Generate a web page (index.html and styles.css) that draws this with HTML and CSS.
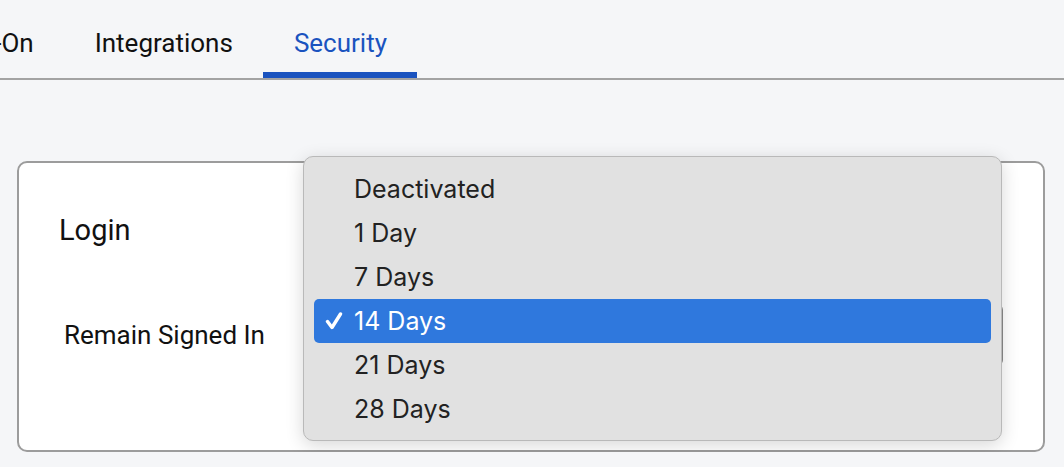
FILE: index.html
```html
<!DOCTYPE html>
<html lang="en">
<head>
  <meta charset="UTF-8">
  <meta name="viewport" content="width=device-width, initial-scale=1.0">
  <title>Settings - Security</title>
  <link rel="stylesheet" href="styles.css">
</head>
<body>
  <!-- Tab strip -->
  <div class="tab-strip">
    <div class="tabs">
      <div class="tab">Single Sign-On</div>
      <div class="tab">Integrations</div>
      <div class="tab active">Security</div>
    </div>
  </div>

  <div class="card">
    <h2 class="card-title">Login</h2>
    <div class="field-row">
      <label class="field-label">Remain Signed In</label>
      <div class="select-box"></div>
    </div>

    <!-- Open select menu -->
    <ul class="menu">
      <li class="menu-item">Deactivated</li>
      <li class="menu-item">1 Day</li>
      <li class="menu-item">7 Days</li>
      <li class="menu-item selected">
        <span class="check">
          <svg width="18" height="18" viewBox="0 0 18 18"><path d="M2.5 9.5 L7 15.5 L15.5 2" fill="none" stroke="#fff" stroke-width="3.4" stroke-linecap="round" stroke-linejoin="round"/></svg>
        </span>14 Days
      </li>
      <li class="menu-item">21 Days</li>
      <li class="menu-item">28 Days</li>
    </ul>
  </div>
</body>
</html>
```

FILE: styles.css
```css
/* Page */
body {
  margin: 0;
  font-family: Roboto, "Liberation Sans", Arial, sans-serif;
  background-color: #f5f6f8;
  color: #111;
}

/* Tabs */
.tab-strip {
  border-bottom: 2px solid #a3a3a3;
  margin-bottom: 81px;
}

.tabs {
  display: flex;
  justify-content: flex-end;
  width: 417px;
  overflow: hidden;
}

.tab {
  flex: none;
  padding: 28px 30px 14px 31px;
  font-size: 26px;
  line-height: 30px;
  border-bottom: 6px solid transparent;
  white-space: nowrap;
}

.tab.active {
  color: #1a53bf;
  border-bottom-color: #1a53bf;
}

/* Card */
.card {
  position: relative;
  margin: 0 19px 0 17px;
  padding: 49px 40px 84px 40px;
  background-color: #fff;
  border: 2px solid #9c9c9c;
  border-radius: 10px;
}

.card-title {
  margin: 0 0 56px 0;
  font-size: 29px;
  line-height: 36px;
  font-weight: 400;
}

.field-row {
  display: flex;
  align-items: center;
}

.field-label {
  width: 240px;
  padding-left: 5px;
  font-size: 26px;
}

.select-box {
  flex: 1;
  height: 62px;
  box-sizing: border-box;
  border: 2px solid #8a8a8a;
  border-radius: 6px;
}

/* Menu overlay */
.menu {
  position: absolute;
  top: -7px;
  left: 284px;
  width: 699px;
  height: 285px;
  box-sizing: border-box;
  margin: 0;
  padding: 10px;
  list-style: none;
  background-color: #e1e1e1;
  border: 1px solid #b9b9b9;
  border-radius: 10px;
  box-shadow: 0 4px 18px rgba(0, 0, 0, 0.16);
  font-family: Inter, "Open Sans", sans-serif;
  font-size: 25px;
  color: #222;
}

.menu-item {
  display: flex;
  align-items: center;
  height: 44px;
  padding-left: 40px;
  border-radius: 5px;
}

.menu-item.selected {
  padding-left: 11px;
  background-color: #2f78dd;
  color: #fff;
}

.check {
  display: flex;
  width: 29px;
}
```
